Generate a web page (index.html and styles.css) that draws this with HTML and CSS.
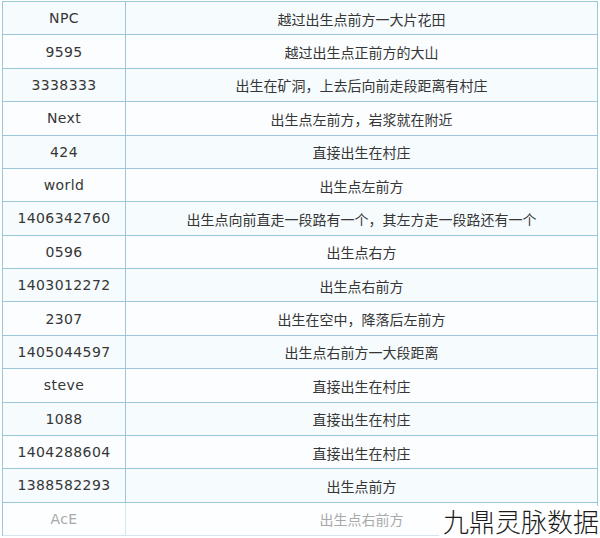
FILE: index.html
```html
<!DOCTYPE html>
<html lang="zh">
<head>
<meta charset="utf-8">
<link rel="stylesheet" href="styles.css">
</head>
<body>
<div class="page">
  <div class="table">
    <div class="row"><div class="seed">NPC</div><div class="desc">越过出生点前方一大片花田</div></div>
    <div class="row"><div class="seed">9595</div><div class="desc">越过出生点正前方的大山</div></div>
    <div class="row"><div class="seed">3338333</div><div class="desc">出生在矿洞，上去后向前走段距离有村庄</div></div>
    <div class="row"><div class="seed">Next</div><div class="desc">出生点左前方，岩浆就在附近</div></div>
    <div class="row"><div class="seed">424</div><div class="desc">直接出生在村庄</div></div>
    <div class="row"><div class="seed">world</div><div class="desc">出生点左前方</div></div>
    <div class="row"><div class="seed">1406342760</div><div class="desc">出生点向前直走一段路有一个，其左方走一段路还有一个</div></div>
    <div class="row"><div class="seed">0596</div><div class="desc">出生点右方</div></div>
    <div class="row"><div class="seed">1403012272</div><div class="desc">出生点右前方</div></div>
    <div class="row"><div class="seed">2307</div><div class="desc">出生在空中，降落后左前方</div></div>
    <div class="row"><div class="seed">1405044597</div><div class="desc">出生点右前方一大段距离</div></div>
    <div class="row"><div class="seed">steve</div><div class="desc">直接出生在村庄</div></div>
    <div class="row"><div class="seed">1088</div><div class="desc">直接出生在村庄</div></div>
    <div class="row"><div class="seed">1404288604</div><div class="desc">直接出生在村庄</div></div>
    <div class="row"><div class="seed">1388582293</div><div class="desc">出生点前方</div></div>
    <div class="row faded"><div class="seed">AcE</div><div class="desc">出生点右前方</div></div>
  </div>
  <div class="watermark">九鼎灵脉数据</div>
</div>
</body>
</html>
```

FILE: styles.css
```css
html, body {
  margin: 0;
  padding: 0;
  background: #ffffff;
}

.page {
  position: relative;
  width: 600px;
  height: 538px;
  overflow: hidden;
  padding: 1px 0 0 2px;
  box-sizing: border-box;
}

.table {
  width: 594px;
  border-top: 1px solid #9cc7d9;
  border-left: 1px solid #9cc7d9;
  border-right: 1px solid #9cc7d9;
  display: flex;
  flex-direction: column;
  font-family: "DejaVu Sans", "Noto Sans CJK SC", sans-serif;
  font-size: 14px;
  color: #363636;
}

.row {
  display: flex;
  height: 33.375px;
  box-sizing: border-box;
  border-bottom: 1px solid #9cc7d9;
  background: #fbfdfe;
}

.row:nth-child(odd) {
  background: #f6fbfd;
}

.seed {
  width: 122px;
  flex: none;
  border-right: 1px solid #9cc7d9;
  display: flex;
  align-items: center;
  justify-content: center;
  letter-spacing: 0.4px;
}

.desc {
  flex: 1;
  display: flex;
  align-items: center;
  justify-content: center;
  padding-top: 1px;
  font-family: "Noto Sans CJK SC", sans-serif;
}

.row.faded {
  color: #a9a9a9;
  background: #fdfeff;
  border-bottom-color: #d4e7ef;
}

.row.faded .seed {
  border-right-color: #d4e7ef;
}

.watermark {
  position: absolute;
  right: 1px;
  bottom: 2px;
  font-family: "Noto Sans CJK SC", sans-serif;
  font-weight: 300;
  font-size: 26px;
  line-height: 30px;
  color: #1c1c1c;
  background: #ffffff;
  padding-left: 4px;
}
```
